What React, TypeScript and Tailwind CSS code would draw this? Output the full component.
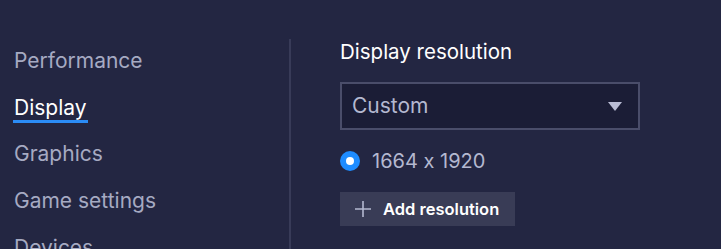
const navItems = ['Performance', 'Display', 'Graphics', 'Game settings', 'Devices'];

export default function App() {
  const active = 'Display';
  return (
    <div
      className="flex h-[249px] w-full overflow-hidden bg-[#232642] text-white"
      style={{ fontFamily: 'Inter, "Noto Sans", sans-serif', fontFeatureSettings: '"calt" 0' }}
    >
      <aside className="w-[291px] shrink-0 pt-[38px]">
        <div className="relative">
          <div className="absolute right-0 top-[1px] h-[400px] w-[2px] bg-[#383b58]" />
          {navItems.map((item) => (
            <div key={item} className="flex h-[46.6px] items-center pl-[14px]">
              <span
                className={
                  item === active
                    ? 'relative inline-block text-[21px] leading-[24px] text-white'
                    : 'inline-block text-[21px] leading-[24px] text-[#a6aac2]'
                }
              >
                {item}
                {item === active && (
                  <span className="absolute left-[-1px] right-[-1px] top-full h-[3px] bg-[#2b8cf6]" />
                )}
              </span>
            </div>
          ))}
        </div>
      </aside>

      <main className="flex flex-col items-start pl-[49px] pt-[40px]">
        <h2 className="text-[20.5px] font-normal leading-[24px] text-white">Display resolution</h2>

        <button className="mt-[18px] flex h-[48px] w-[300px] items-center justify-between border-2 border-[#4a4d6a] bg-[#1b1d36] pl-[10px] pr-[16px]">
          <span className="text-[21px] leading-[24px] text-[#b4b8d0]">Custom</span>
          <svg width="14" height="9" viewBox="0 0 14 9" className="text-[#b9bcd4]">
            <path d="M0 0 H14 L7 9 Z" fill="currentColor" />
          </svg>
        </button>

        <label className="mt-[19px] flex h-[24px] items-center gap-[12px]">
          <span className="flex h-[20px] w-[20px] items-center justify-center rounded-full bg-[#1e8cff]">
            <span className="h-[8px] w-[8px] rounded-full bg-white" />
          </span>
          <span className="text-[20px] leading-[24px] text-[#b4b8d0]">1664 x 1920</span>
        </label>

        <button className="mt-[19px] flex h-[34px] items-center gap-[11px] bg-[#393c56] pl-[14px] pr-[16px]">
          <svg width="18" height="18" viewBox="0 0 18 18" className="text-[#b4b8d0]">
            <path d="M9 1 V17 M1 9 H17" stroke="currentColor" strokeWidth="1.6" />
          </svg>
          <span className="text-[16.5px] font-semibold leading-[20px] text-white">Add resolution</span>
        </button>
      </main>
    </div>
  );
}
